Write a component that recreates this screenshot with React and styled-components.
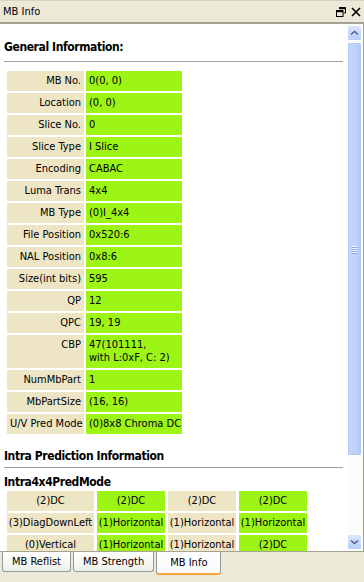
import React from 'react';
import styled, { createGlobalStyle } from 'styled-components';

const GlobalStyle = createGlobalStyle`
  html, body {
    margin: 0;
    padding: 0;
    background: #ece9d8;
  }
  * {
    box-sizing: border-box;
  }
`;

const Window = styled.div`
  width: 364px;
  height: 582px;
  display: flex;
  flex-direction: column;
  background: #ece9d8;
  font-family: 'DejaVu Sans Condensed', 'DejaVu Sans', sans-serif;
  font-size: 11px;
  color: #000;
  overflow: hidden;
`;

const TitleBar = styled.div`
  height: 24px;
  flex: none;
  display: flex;
  align-items: center;
  justify-content: space-between;
  padding: 0 3px 0 3px;
  border-top: 1px solid #d8d4c4;
  border-bottom: 2px solid #a6a394;
  background: #ece9d8;
`;

const TitleText = styled.span`
  font-size: 11px;
`;

const TitleButtons = styled.div`
  display: flex;
  align-items: center;
  gap: 5px;
`;

const Body = styled.div`
  flex: none;
  height: 528px;
  display: flex;
  background: #fff;
  border-right: 1px solid #a6a394;
  border-bottom: 1px solid #a6a394;
`;

const Content = styled.div`
  flex: 1;
  overflow: hidden;
  padding: 15px 4px 0 4px;
`;

const Heading = styled.div`
  font-weight: bold;
  font-size: 12px;
  letter-spacing: -0.4px;
  line-height: 16px;
  padding-bottom: ${({ $gap }) => $gap || 5}px;
  border-bottom: ${({ $rule }) => ($rule ? '1px solid #a0a0a0' : 'none')};
`;

const InfoTable = styled.div`
  display: grid;
  grid-template-columns: 77px 96px;
  gap: 2px;
  margin: 9px 0 0 3px;
`;

const Cell = styled.div`
  line-height: 13px;
  padding: 3px 3px 4px 3px;
  text-align: ${({ $label }) => ($label ? 'right' : 'left')};
  background: ${({ $label }) => ($label ? '#ede5c4' : '#9cf514')};
  white-space: nowrap;
`;

const Section = styled.div`
  margin-top: 14px;
`;

const SubHeading = styled.div`
  font-weight: bold;
  font-size: 12px;
  letter-spacing: -0.4px;
  line-height: 16px;
  margin-top: 6px;
`;

const ModeGrid = styled.div`
  display: grid;
  grid-template-columns: 87px 68px 68px 68px;
  column-gap: 3px;
  row-gap: 2px;
  margin: 1px 0 0 3px;
`;

const ModeCell = styled.div`
  height: 20px;
  line-height: 20px;
  text-align: center;
  white-space: nowrap;
  background: ${({ $green }) => ($green ? '#9cf514' : '#ede5c4')};
`;

const ScrollBar = styled.div`
  width: 16px;
  flex: none;
  display: flex;
  flex-direction: column;
  background: #fbfbf8;
  padding: 1px 0;
`;

const ScrollButton = styled.div`
  height: 16px;
  flex: none;
  margin: 0 1px 0 0;
  border: 1px solid #fff;
  border-radius: 2px;
  background: linear-gradient(to bottom, #dbe6fd, #b9cdf9);
  display: flex;
  align-items: center;
  justify-content: center;
`;

const ScrollTrack = styled.div`
  flex: 1;
  display: flex;
  flex-direction: column;
  padding: 1px 1px 78px 0;
`;

const Thumb = styled.div`
  flex: 1;
  border: 1px solid #fff;
  border-radius: 2px;
  background: linear-gradient(to right, #c5d6fc, #bcd0fb 70%, #aec4f5);
  box-shadow: inset 0 0 0 1px #b5c9f5;
  display: flex;
  align-items: center;
  justify-content: center;
`;

const Grip = styled.div`
  width: 7px;
  display: flex;
  flex-direction: column;
  gap: 1px;
  span {
    display: block;
    height: 1px;
    background: #eef4fe;
    box-shadow: 0 1px 0 #8faae8;
  }
`;

const TabStrip = styled.div`
  flex: 1;
  display: flex;
  align-items: flex-start;
  padding: 0 0 0 2px;
  background: #ece9d8;
`;

const Tab = styled.div`
  height: ${({ $active }) => ($active ? 23 : 20)}px;
  padding: 0 ${({ $active }) => ($active ? 13 : 9)}px;
  margin-right: ${({ $active }) => ($active ? 0 : 2)}px;
  line-height: ${({ $active }) => ($active ? 22 : 19)}px;
  font-size: 11px;
  background: ${({ $active }) => ($active ? '#fcfcfe' : 'linear-gradient(to bottom, #ffffff, #f0f0ea)')};
  border: 1px solid #919b9c;
  border-top: none;
  border-radius: 0 0 3px 3px;
  border-bottom: ${({ $active }) => ($active ? '2px solid #f6a534' : '1px solid #919b9c')};
`;

const general = [
  ['MB No.', '0(0, 0)'],
  ['Location', '(0, 0)'],
  ['Slice No.', '0'],
  ['Slice Type', 'I Slice'],
  ['Encoding', 'CABAC'],
  ['Luma Trans', '4x4'],
  ['MB Type', '(0)I_4x4'],
  ['File Position', '0x520:6'],
  ['NAL Position', '0x8:6'],
  ['Size(int bits)', '595'],
  ['QP', '12'],
  ['QPC', '19, 19'],
  ['CBP', ['47(101111,', 'with L:0xF, C: 2)']],
  ['NumMbPart', '1'],
  ['MbPartSize', '(16, 16)'],
  ['U/V Pred Mode', '(0)8x8 Chroma DC'],
];

const modes = [
  ['(2)DC', '(2)DC', '(2)DC', '(2)DC'],
  ['(3)DiagDownLeft', '(1)Horizontal', '(1)Horizontal', '(1)Horizontal'],
  ['(0)Vertical', '(1)Horizontal', '(1)Horizontal', '(2)DC'],
];

function Chevron({ down }) {
  return (
    <svg width="9" height="6" viewBox="0 0 9 6">
      <path
        d={down ? 'M1 1.5 L4.5 4.5 L8 1.5' : 'M1 4.5 L4.5 1.5 L8 4.5'}
        fill="none"
        stroke="#4d6185"
        strokeWidth="1.6"
      />
    </svg>
  );
}

function App() {
  return (
    <Window>
      <GlobalStyle />
      <TitleBar>
        <TitleText>MB Info</TitleText>
        <TitleButtons>
          <svg width="10" height="10" viewBox="0 0 10 10">
            <path d="M3 0.5 H9.5 V6 H7.5" fill="none" stroke="#000" strokeWidth="1" />
            <path d="M3 1.5 H9" stroke="#000" strokeWidth="1.4" />
            <rect x="0.5" y="3.5" width="6.5" height="6" fill="none" stroke="#000" />
            <path d="M0.5 4.5 H7" stroke="#000" strokeWidth="1.4" />
          </svg>
          <svg width="10" height="10" viewBox="0 0 10 10">
            <path d="M1 1 L9 9 M9 1 L1 9" stroke="#000" strokeWidth="1.6" />
          </svg>
        </TitleButtons>
      </TitleBar>
      <Body>
        <Content>
          <Heading $rule $gap={6}>General Information:</Heading>
          <InfoTable>
            {general.map(([label, value]) => (
              <React.Fragment key={label}>
                <Cell $label>{label}</Cell>
                <Cell>
                  {Array.isArray(value)
                    ? value.map((line) => <div key={line}>{line}</div>)
                    : value}
                </Cell>
              </React.Fragment>
            ))}
          </InfoTable>
          <Section>
            <Heading $rule $gap={3}>Intra Prediction Information</Heading>
            <SubHeading>Intra4x4PredMode</SubHeading>
            <ModeGrid>
              {modes.map((row, r) =>
                row.map((m, c) => (
                  <ModeCell key={`${r}-${c}`} $green={c % 2 === 1}>
                    {m}
                  </ModeCell>
                ))
              )}
            </ModeGrid>
          </Section>
        </Content>
        <ScrollBar>
          <ScrollButton>
            <Chevron />
          </ScrollButton>
          <ScrollTrack>
            <Thumb>
              <Grip>
                <span />
                <span />
                <span />
                <span />
              </Grip>
            </Thumb>
          </ScrollTrack>
          <ScrollButton>
            <Chevron down />
          </ScrollButton>
        </ScrollBar>
      </Body>
      <TabStrip>
        <Tab>MB Reflist</Tab>
        <Tab>MB Strength</Tab>
        <Tab $active>MB Info</Tab>
      </TabStrip>
    </Window>
  );
}

export default App;
